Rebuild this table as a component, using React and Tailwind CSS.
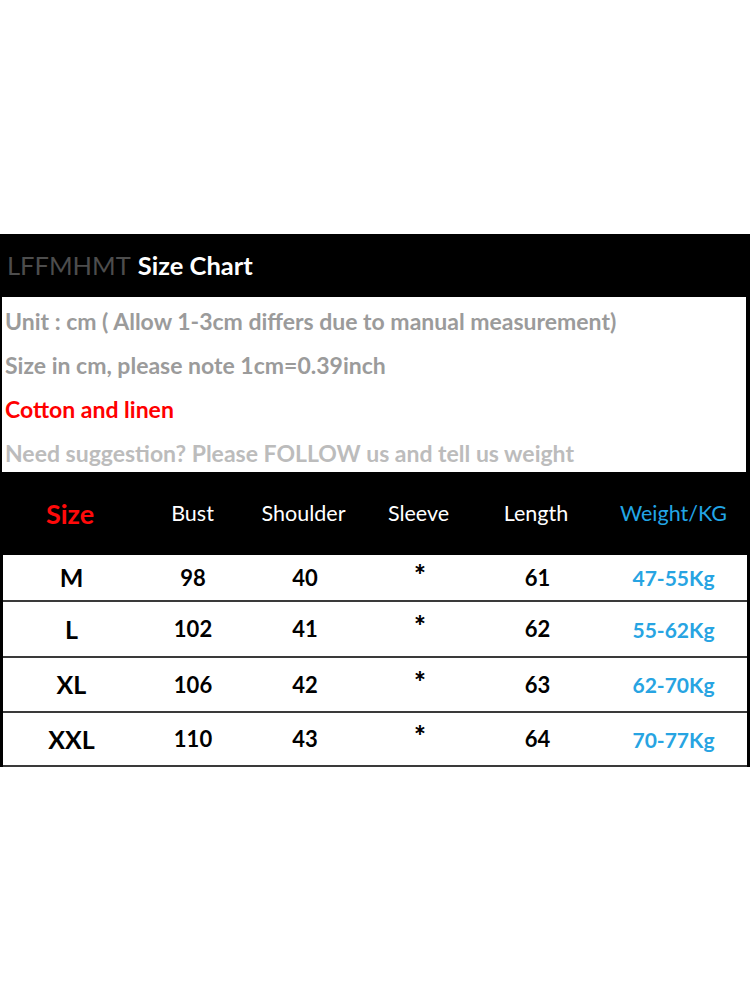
const rows = [
  { size: 'M', bust: '98', shoulder: '40', length: '61', weight: '47-55Kg', h: 'h-[47px]' },
  { size: 'L', bust: '102', shoulder: '41', length: '62', weight: '55-62Kg', h: 'h-[56px]' },
  { size: 'XL', bust: '106', shoulder: '42', length: '63', weight: '62-70Kg', h: 'h-[55px]' },
  { size: 'XXL', bust: '110', shoulder: '43', length: '64', weight: '70-77Kg', h: 'h-[54px]' },
]

const cols = 'grid grid-cols-[140px_105px_117px_113px_122px_1fr] items-center text-center'

export default function App() {
  return (
    <div className="w-[750px] h-[1000px] bg-white font-['Lato','Open_Sans',sans-serif]">
      <div className="pt-[234px]">
        {/* Title bar */}
        <div className="bg-black h-[63px] flex items-center pl-[7px] text-[25.5px] leading-none">
          <span className="text-[#4d4d4d]">LFFMHMT</span>
          <span className="text-white font-bold ml-[7px]">Size Chart</span>
        </div>

        {/* Notes */}
        <div className="bg-white h-[175px] border-l-2 border-r-4 border-black flex flex-col pl-[3px] pt-[2px] text-[23px] font-bold leading-none">
          <div className="h-[44px] shrink-0 flex items-center text-[#9b9b9b]">Unit : cm ( Allow 1-3cm differs due to manual measurement)</div>
          <div className="h-[44px] shrink-0 flex items-center text-[#9b9b9b]">Size in cm, please note 1cm=0.39inch</div>
          <div className="h-[44px] shrink-0 flex items-center text-[#ff0000]">Cotton and linen</div>
          <div className="h-[44px] shrink-0 flex items-center text-[#bcbcbc]">Need suggestion? Please FOLLOW us and tell us weight</div>
        </div>

        {/* Table header */}
        <div className={`${cols} bg-black h-[83px] text-white text-[21.5px] leading-none`}>
          <div className="text-[#ff0a0a] font-bold text-[27px]">Size</div>
          <div>Bust</div>
          <div>Shoulder</div>
          <div>Sleeve</div>
          <div>Length</div>
          <div className="text-[#22a6e6]">Weight/KG</div>
        </div>

        {/* Table rows */}
        <div className="border-l-[3px] border-r-[3px] border-black">
          {rows.map((r) => (
            <div key={r.size} className={`${cols} ${r.h} border-b-2 border-[#3a3a3a] text-[22px] font-bold text-black leading-none`}>
              <div className="text-[25px] -ml-[3px]">{r.size}</div>
              <div className="-ml-[5px]">{r.bust}</div>
              <div className="-ml-[3px]">{r.shoulder}</div>
              <div className="-ml-[3px] -mt-[8px] text-[28px] font-black">*</div>
              <div className="-ml-[3px]">{r.length}</div>
              <div className="text-[#27a4e2] text-[21px]">{r.weight}</div>
            </div>
          ))}
        </div>
      </div>
    </div>
  )
}
